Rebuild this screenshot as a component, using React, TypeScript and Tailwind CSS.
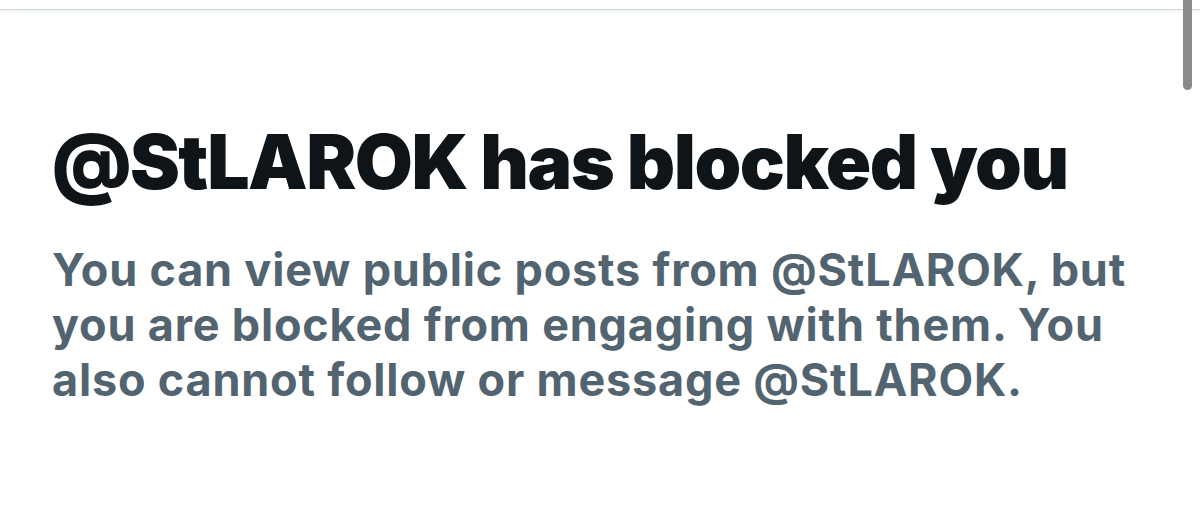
import React from 'react';

const handle = '@StLAROK';

export default function App() {
  return (
    <div className="relative min-h-[507px] w-full overflow-hidden bg-white font-['Inter','Liberation_Sans',sans-serif]">
      {/* top header edge */}
      <div className="h-[10px] border-b border-[#cfd9de] shadow-[0_1px_2px_rgba(207,217,222,0.5)]" />

      <div className="pl-[52px] pt-[112px]">
        <h1 className="text-[75px] font-black leading-[80px] tracking-[-1.5px] text-[#0f1419]">
          {handle} has blocked you
        </h1>
        <p className="mt-[40px] w-[1090px] text-[45px] font-bold leading-[55px] tracking-[0.8px] text-[#536471]">
          You can view public posts from {handle}, but you are blocked from engaging with them. You also
          cannot follow or message {handle}.
        </p>
      </div>

      {/* scrollbar thumb */}
      <div className="absolute right-[8px] top-0 h-[90px] w-[9px] rounded-b-full bg-[#8a8a8a]" />
    </div>
  );
}
